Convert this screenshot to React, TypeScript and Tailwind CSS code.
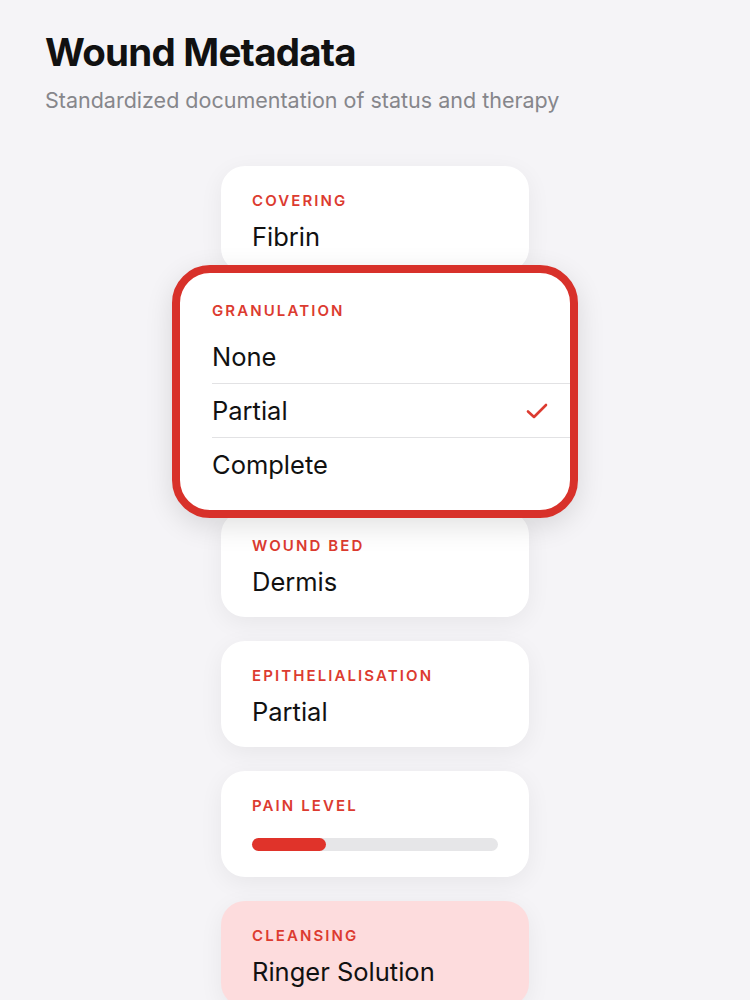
import React from "react";

const font = { fontFamily: "Inter, 'Noto Sans', sans-serif" };

function Label({ children }: { children: React.ReactNode }) {
  return (
    <p className="text-[15px] leading-[20px] font-semibold tracking-[0.14em] uppercase text-[#dc3b30]">
      {children}
    </p>
  );
}

function Card({ label, value, pink }: { label: string; value: string; pink?: boolean }) {
  return (
    <div
      className={`h-[106px] rounded-[24px] px-[31px] pt-[25px] shadow-[0_6px_24px_rgba(0,0,0,0.06)] ${
        pink ? "bg-[#fddcdd]" : "bg-white"
      }`}
    >
      <Label>{label}</Label>
      <p className="mt-[11px] text-[25.5px] leading-[30px] text-[#111]">{value}</p>
    </div>
  );
}

function Check() {
  return (
    <svg width="22" height="16" viewBox="0 0 22 16" fill="none">
      <path d="M2 8.5 L8 14 L20 2" stroke="#dc3b30" strokeWidth="2.6" strokeLinecap="round" strokeLinejoin="round" />
    </svg>
  );
}

export default function App() {
  const options = ["None", "Partial", "Complete"];
  const selected = "Partial";
  const pain = 30;

  return (
    <div className="min-h-screen h-[1000px] overflow-hidden bg-[#f5f4f7]" style={font}>
      <div className="px-[45px] pt-[30px]">
        <h1 className="text-[38.5px] leading-[44px] font-bold tracking-[-0.02em] text-[#111]">Wound Metadata</h1>
        <p className="mt-[12px] text-[21.5px] leading-[28px] text-[#86868b]">
          Standardized documentation of status and therapy
        </p>
      </div>

      <div className="mx-auto mt-[52px] w-[308px] flex flex-col gap-[24px]">
        <Card label="Covering" value="Fibrin" />

        <div className="relative h-[191px] rounded-[24px] bg-white">
          <div className="absolute -left-[49px] -right-[49px] -top-[31px] -bottom-[31px] rounded-[38px] border-[8px] border-[#d8312a] bg-white pl-[32px] pt-[28px] pb-[19px] shadow-[0_8px_28px_rgba(0,0,0,0.12)]">
            <Label>Granulation</Label>
            <div className="mt-[9px]">
              {options.map((o, i) => (
                <div
                  key={o}
                  className={`h-[54px] flex items-center justify-between pr-[22px] ${
                    i < options.length - 1 ? "border-b border-[#e2e2e4]" : ""
                  }`}
                >
                  <span className="text-[25.5px] leading-[30px] text-[#111]">{o}</span>
                  {o === selected && <Check />}
                </div>
              ))}
            </div>
          </div>
        </div>

        <Card label="Wound Bed" value="Dermis" />
        <Card label="Epithelialisation" value="Partial" />

        <div className="h-[106px] rounded-[24px] bg-white px-[31px] pt-[25px] shadow-[0_6px_24px_rgba(0,0,0,0.06)]">
          <Label>Pain Level</Label>
          <div className="mt-[22px] h-[13px] w-full rounded-full bg-[#e6e6e8]">
            <div className="h-full rounded-full bg-[#e0332a]" style={{ width: `${pain}%` }} />
          </div>
        </div>

        <Card label="Cleansing" value="Ringer Solution" pink />
      </div>
    </div>
  );
}
